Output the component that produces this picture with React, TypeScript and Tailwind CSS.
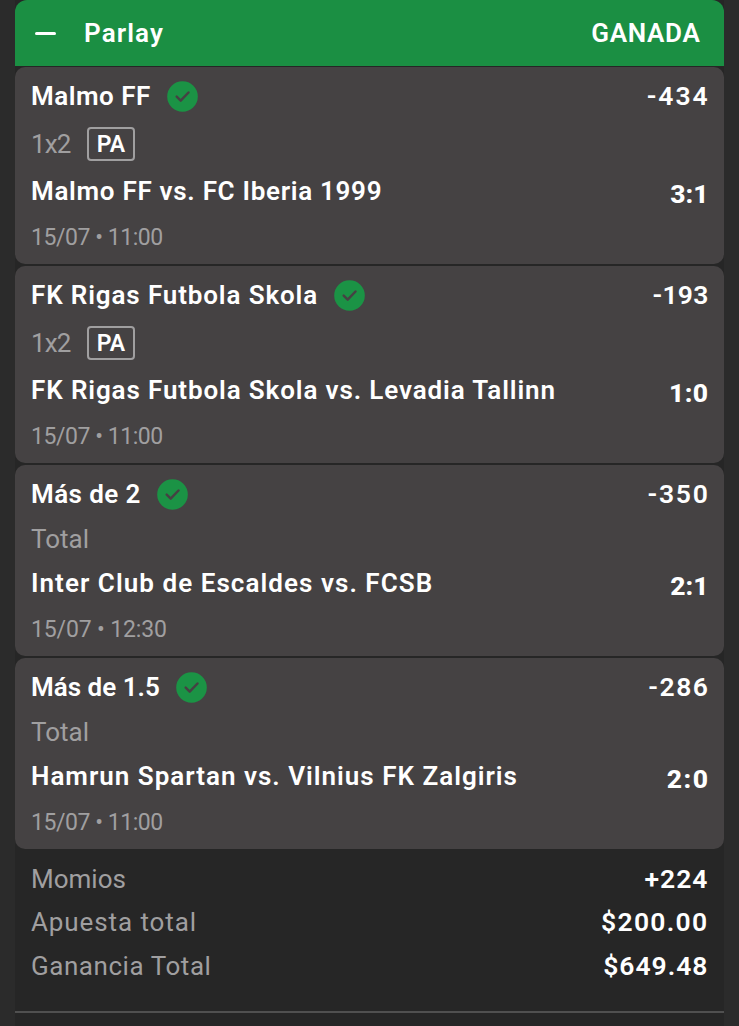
interface Pick {
  name: string;
  market: string;
  badge?: string;
  match: string;
  date: string;
  odds: string;
  score: string;
  nameClass: string;
  matchClass: string;
  dateClass: string;
  oddsClass: string;
  scoreClass: string;
}

const PICKS: Pick[] = [
  {
    name: "Malmo FF",
    market: "1x2",
    badge: "PA",
    match: "Malmo FF vs. FC Iberia 1999",
    date: "15/07 • 11:00",
    odds: "-434",
    score: "3:1",
    nameClass: "tracking-[0.5px]",
    matchClass: "tracking-[0.7px]",
    dateClass: "tracking-[-0.45px]",
    oddsClass: "tracking-[1.9px] -mr-[2px]",
    scoreClass: "tracking-[0px] -mr-px",
  },
  {
    name: "FK Rigas Futbola Skola",
    market: "1x2",
    badge: "PA",
    match: "FK Rigas Futbola Skola vs. Levadia Tallinn",
    date: "15/07 • 11:00",
    odds: "-193",
    score: "1:0",
    nameClass: "tracking-[0.87px]",
    matchClass: "tracking-[0.88px]",
    dateClass: "tracking-[-0.45px]",
    oddsClass: "tracking-[0.2px] -mr-px",
    scoreClass: "tracking-[0.4px] -mr-px",
  },
  {
    name: "Más de 2",
    market: "Total",
    match: "Inter Club de Escaldes vs. FCSB",
    date: "15/07 • 12:30",
    odds: "-350",
    score: "2:1",
    nameClass: "tracking-[0.4px]",
    matchClass: "tracking-[1.05px]",
    dateClass: "tracking-[-0.15px]",
    oddsClass: "tracking-[1.7px] -mr-[2px]",
    scoreClass: "tracking-[0px] -mr-px",
  },
  {
    name: "Más de 1.5",
    market: "Total",
    match: "Hamrun Spartan vs. Vilnius FK Zalgiris",
    date: "15/07 • 11:00",
    odds: "-286",
    score: "2:0",
    nameClass: "tracking-[0px]",
    matchClass: "tracking-[1px]",
    dateClass: "tracking-[-0.45px]",
    oddsClass: "tracking-[1.5px] -mr-[2px]",
    scoreClass: "tracking-[1.5px] -mr-[2px]",
  },
];

const TOTALS = [
  { label: "Momios", value: "+224", labelClass: "tracking-[0px]", valueClass: "tracking-[1px]" },
  { label: "Apuesta total", value: "$200.00", labelClass: "tracking-[0.9px]", valueClass: "tracking-[1.3px]" },
  { label: "Ganancia Total", value: "$649.48", labelClass: "tracking-[0.55px]", valueClass: "tracking-[1px]" },
];

function WonIcon() {
  return (
    <svg className="size-[31px] shrink-0" viewBox="0 0 31 31" fill="none">
      <circle cx="15.5" cy="15.5" r="15.3" fill="#1b9345" />
      <path
        d="M9.7 15.7l4 3.9 7.8-8.1"
        stroke="#454243"
        strokeWidth="2.5"
        strokeLinecap="round"
        strokeLinejoin="round"
      />
    </svg>
  );
}

function PickCard({ pick }: { pick: Pick }) {
  return (
    <div className="rounded-[10px] bg-[#454243] px-4 pb-[7px]">
      <div className="flex h-[58px] items-center justify-between font-semibold">
        <div className="flex items-center gap-4">
          <span className={pick.nameClass}>{pick.name}</span>
          <WonIcon />
        </div>
        <span className={`text-[26.5px] ${pick.oddsClass}`}>{pick.odds}</span>
      </div>
      <div className={`flex items-center text-[#a09fa0] ${pick.badge ? "h-[38px]" : "h-8"}`}>
        <span className={pick.badge ? "w-14 tracking-[-0.9px]" : ""}>{pick.market}</span>
        {pick.badge && (
          <span className="flex h-[34px] w-12 items-center justify-center rounded-[4px] border-2 border-[#a09fa0] pt-[2px] text-[23px] font-semibold text-white">
            {pick.badge}
          </span>
        )}
      </div>
      <div className="flex h-14 items-center justify-between">
        <span className={`font-semibold ${pick.matchClass}`}>{pick.match}</span>
        <span className={`pt-[6px] text-[26.5px] font-extrabold ${pick.scoreClass}`}>{pick.score}</span>
      </div>
      <div className={`flex h-[38px] items-center text-[23px] text-[#a09fa0] ${pick.dateClass}`}>
        {pick.date}
      </div>
    </div>
  );
}

export default function App() {
  return (
    <div className="h-[1026px] overflow-hidden bg-[#2b2b2b] pr-[15.5px] pl-[15px] font-[Roboto,sans-serif] text-[26px] leading-[30px] whitespace-nowrap text-white">
      <div className="h-full bg-[#262626]">
        <div className="flex h-[66px] items-center justify-between rounded-t-[12px] bg-[#1b8f43] pr-[23px] pl-5 font-semibold">
          <div className="flex items-center gap-7">
            <span className="h-[3px] w-[21px] rounded-full bg-white" />
            <span className="tracking-[1.1px]">Parlay</span>
          </div>
          <span className="tracking-[0.7px]">GANADA</span>
        </div>
        <div className="flex flex-col gap-[2px] pt-px">
          {PICKS.map((pick) => (
            <PickCard key={pick.name} pick={pick} />
          ))}
        </div>
        <div className="flex h-[164px] flex-col border-b-2 border-[#505050] px-4 pt-2">
          {TOTALS.map((row) => (
            <div key={row.label} className="flex h-[43.5px] items-center justify-between">
              <span className={`text-[#a09fa0] ${row.labelClass}`}>{row.label}</span>
              <span className={`-mr-px text-[26.5px] font-semibold ${row.valueClass}`}>{row.value}</span>
            </div>
          ))}
        </div>
      </div>
    </div>
  );
}
